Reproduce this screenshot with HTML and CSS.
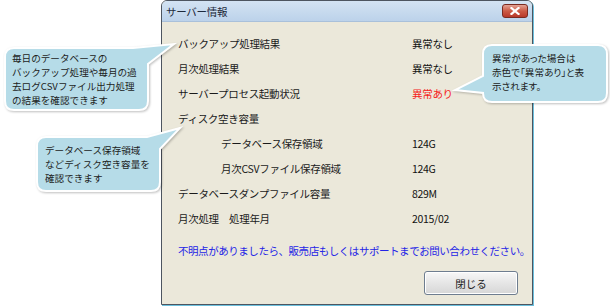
FILE: index.html
```html
<!DOCTYPE html>
<html lang="ja">

<head>
    <meta charset="UTF-8">
    <title>サーバー情報</title>
    <link rel="stylesheet" href="styles.css">
</head>

<body>
    <div id="stage">
        <div class="window">
            <div class="titlebar">
                <span class="title">サーバー情報</span>
                <span class="close-btn">
                    <svg width="10" height="8" viewBox="0 0 10 8">
                        <path d="M1.5 1 L8.5 7 M8.5 1 L1.5 7" stroke="#fff" stroke-width="2.2" stroke-linecap="square"/>
                    </svg>
                </span>
            </div>
            <div class="client">
                <div class="info">
                    <div class="label">バックアップ処理結果</div>
                    <div class="value">異常なし</div>
                    <div class="label">月次処理結果</div>
                    <div class="value">異常なし</div>
                    <div class="label">サーバープロセス起動状況</div>
                    <div class="value error">異常あり</div>
                    <div class="label">ディスク空き容量</div>
                    <div class="value"></div>
                    <div class="label indent">データベース保存領域</div>
                    <div class="value">124G</div>
                    <div class="label indent">月次CSVファイル保存領域</div>
                    <div class="value">124G</div>
                    <div class="label">データベースダンプファイル容量</div>
                    <div class="value">829M</div>
                    <div class="label">月次処理　処理年月</div>
                    <div class="value">2015/02</div>
                </div>
                <p class="notice">不明点がありましたら、販売店もしくはサポートまでお問い合わせください。</p>
                <div class="actions">
                    <button class="close-button">閉じる</button>
                </div>
            </div>
        </div>

        <div class="bubble bubble-backup">
            <svg class="bubble-shape" width="143" height="62">
                <path d="M9 0 H128 L169 -4 L143 16 V53 Q143 62 134 62 H9 Q0 62 0 53 V9 Q0 0 9 0 Z"/>
            </svg>
            <p>
                <span>毎日のデータベースの</span>
                <span>バックアップ処理や毎月の過</span>
                <span>去ログCSVファイル出力処理</span>
                <span>の結果を確認できます</span>
            </p>
        </div>

        <div class="bubble bubble-disk">
            <svg class="bubble-shape" width="123" height="54">
                <path d="M9 0 H110 L143 -9 L123 12 V45 Q123 54 114 54 H9 Q0 54 0 45 V9 Q0 0 9 0 Z"/>
            </svg>
            <p>
                <span>データベース保存領域</span>
                <span>などディスク空き容量を</span>
                <span>確認できます</span>
            </p>
        </div>

        <div class="bubble bubble-error">
            <svg class="bubble-shape" width="124" height="57">
                <path d="M9 0 H115 Q124 0 124 9 V48 Q124 57 115 57 H9 Q0 57 0 48 L-28 45 L0 31 V9 Q0 0 9 0 Z"/>
            </svg>
            <p>
                <span>異常があった場合は</span>
                <span>赤色で「異常あり」と表</span>
                <span>示されます。</span>
            </p>
        </div>
    </div>
</body>

</html>
```

FILE: styles.css
```css
body {
    margin: 0;
    background-color: #fff;
    font-family: "Noto Sans CJK JP", "Noto Sans", sans-serif;
    color: #1a1a1a;
}

#stage {
    position: relative;
    width: 610px;
    height: 307px;
    overflow: hidden;
}

.window {
    margin-left: 161px;
    width: 370px;
    height: 303px;
    border: 1px solid #4d5560;
    border-radius: 6px 6px 0 0;
    background-color: #ebe8da;
    box-shadow: 1px 1px 0 #6cc0dd;
    display: flex;
    flex-direction: column;
}

.titlebar {
    height: 20px;
    display: flex;
    align-items: center;
    justify-content: space-between;
    padding: 0 4px;
    border-radius: 5px 5px 0 0;
    background: linear-gradient(#d3e3f3, #bcd2ea);
    border-bottom: 1px solid #a9c0da;
}

.title {
    font-size: 10.5px;
    color: #1d2a3c;
    letter-spacing: -0.3px;
}

.close-btn {
    width: 24px;
    height: 12px;
    border: 1px solid #7a2a20;
    border-radius: 3px;
    background: linear-gradient(#e3a396, #cc5a45 50%, #b8392a);
    display: flex;
    align-items: center;
    justify-content: center;
}

.client {
    flex: 1;
    padding: 9px 14px 0 16px;
    display: flex;
    flex-direction: column;
}

.info {
    display: grid;
    grid-template-columns: 234px auto;
    grid-auto-rows: 25px;
    align-items: center;
    font-size: 10.5px;
    letter-spacing: -0.3px;
}

.label.indent {
    padding-left: 43px;
}

.value {
    color: #111;
}

.value.error {
    color: #f51c1c;
}

.notice {
    margin: 7px 0 0;
    height: 25px;
    line-height: 25px;
    font-size: 10.5px;
    letter-spacing: -0.45px;
    color: #2424e6;
    white-space: nowrap;
}

.actions {
    display: flex;
    justify-content: flex-end;
    margin-top: 8px;
}

.close-button {
    width: 94px;
    height: 24px;
    border: 1px solid #6e7d8f;
    border-radius: 3px;
    background: linear-gradient(#f7f7f7, #e6e6e6 50%, #d6d6d6);
    box-shadow: inset 0 0 0 1px #fff;
    font-family: inherit;
    font-size: 10.5px;
    color: #1a1a1a;
}

.bubble {
    position: absolute;
    box-sizing: border-box;
}

.bubble-shape {
    position: absolute;
    left: 0;
    top: 0;
    overflow: visible;
    filter: drop-shadow(1px 1px 1px rgba(0, 0, 0, 0.25));
}

.bubble-shape path {
    fill: #b6dce8;
    stroke: #fff;
    stroke-width: 2;
}

.bubble p {
    position: relative;
    margin: 0;
    display: flex;
    flex-direction: column;
    font-size: 9.6px;
    color: #1c1c1c;
}

.bubble p span {
    display: block;
    height: 14px;
    line-height: 14px;
    white-space: nowrap;
}

.bubble-backup {
    left: 5px;
    top: 48px;
    width: 143px;
    height: 62px;
    padding: 3px 0 0 7px;
}

.bubble-disk {
    left: 37px;
    top: 137px;
    width: 123px;
    height: 54px;
    padding: 6px 0 0 8px;
}

.bubble-error {
    left: 483px;
    top: 45px;
    width: 124px;
    height: 57px;
    padding: 6px 0 0 9px;
}

.bubble-error p {
    font-feature-settings: "palt";
}
```
